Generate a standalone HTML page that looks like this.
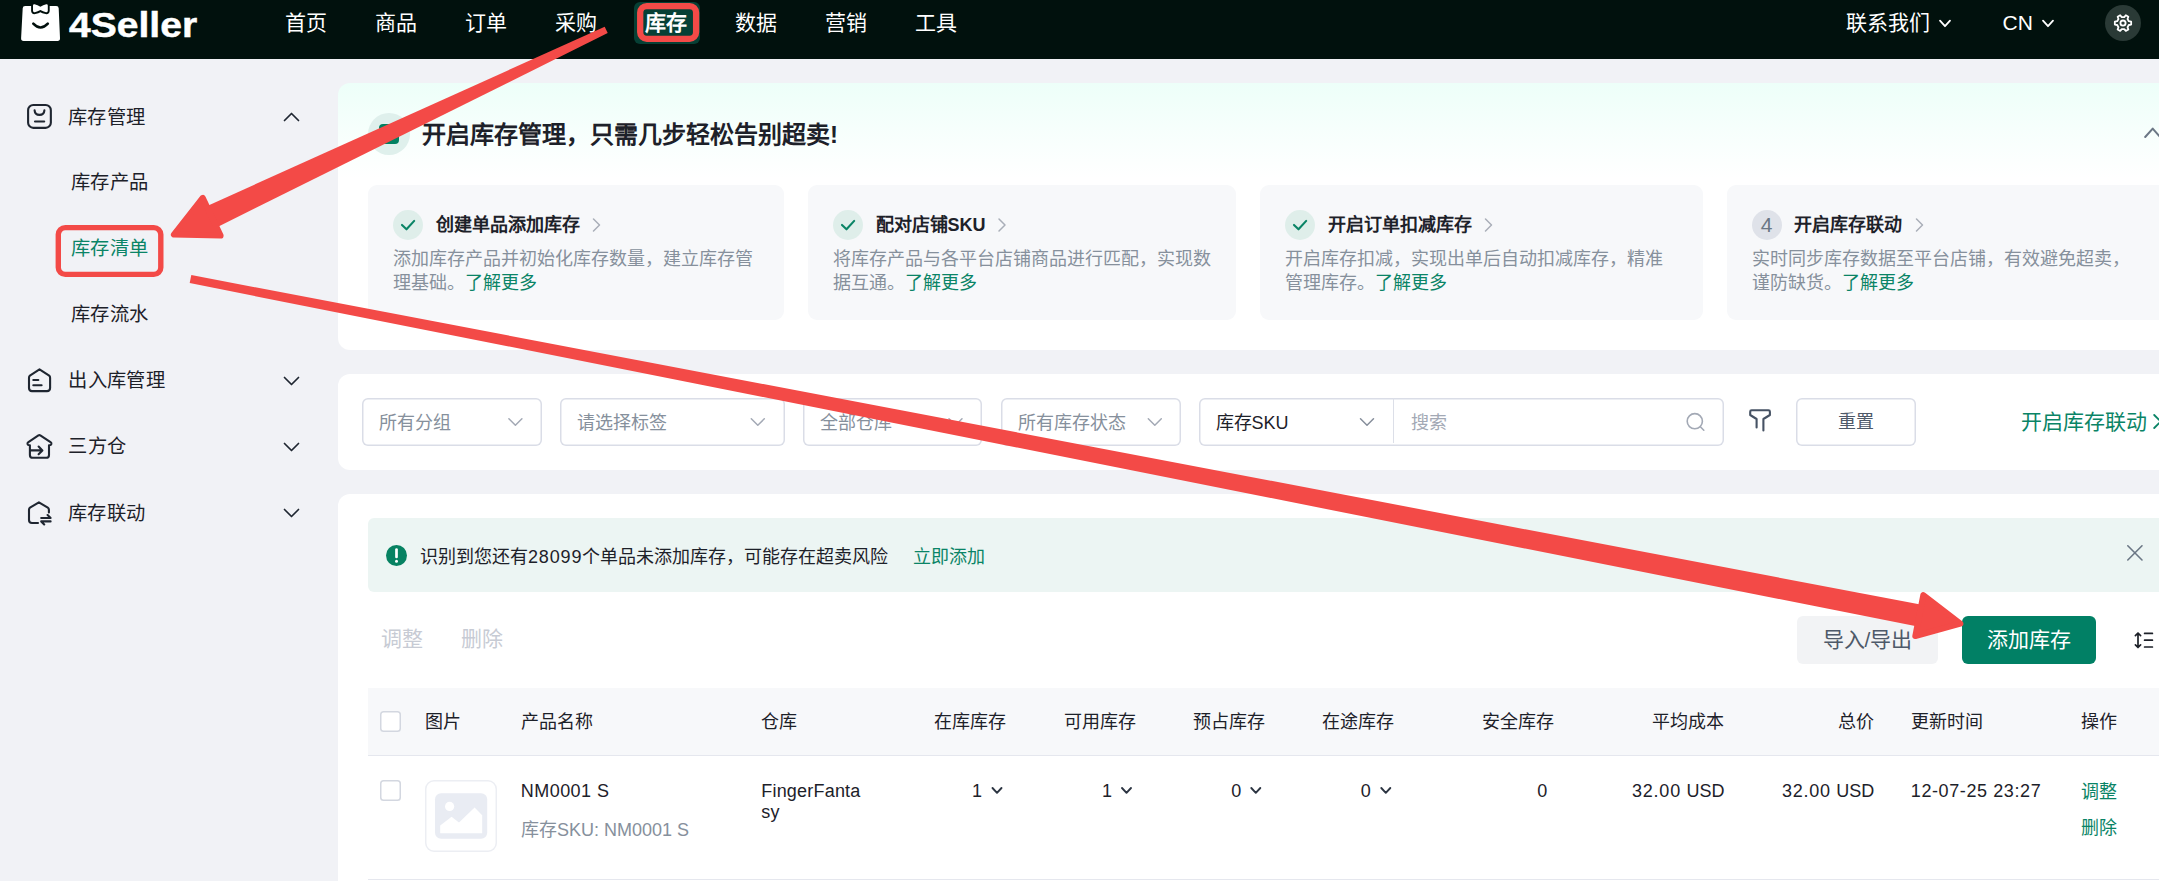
<!DOCTYPE html>
<html lang="zh-CN">
<head>
<meta charset="utf-8">
<title>4Seller - 库存清单</title>
<style>
*{box-sizing:border-box;margin:0;padding:0}
html,body{width:2159px;height:881px;overflow:hidden}
body{position:relative;background:#f1f2f6;font-family:"Liberation Sans",sans-serif;color:#1d2129;font-size:18px}
.t{position:absolute;white-space:nowrap;display:block}
.j{display:inline-block;white-space:nowrap;text-align-last:justify}
.abs{position:absolute}
header{position:absolute;left:0;top:0;width:2159px;height:59px;background:#01110d}
.card{position:absolute;left:338px;width:1840px;background:#fff;border-radius:12px}
.step{position:absolute;top:102px;height:134.5px;background:#f7f8fa;border-radius:9px}
.sel{position:absolute;top:24px;height:48px;box-shadow:inset 0 0 0 1.5px #dadde7;border-radius:6px;background:#fff}
.cb{position:absolute;width:21px;height:21px;box-shadow:inset 0 0 0 1.5px #d3d7e0;border-radius:3.5px;background:#fff}
svg{position:absolute;left:0;top:0;overflow:visible}
a{color:#0a8466;text-decoration:none}
</style>
</head>
<body>

<header>
<svg width="70" height="59" viewBox="0 0 70 59">
<path d="M25.2 5.9 H56.2 Q58.6 5.9 58.7 8.3 L60 38.3 Q60.1 40.9 57.5 40.9 H23.6 Q21 40.9 21.1 38.3 L22.7 8.3 Q22.8 5.9 25.2 5.9Z" fill="#fff"/>
<path d="M33 5.6 Q33 4 34.6 4.3 Q37.6 5 40.4 6.7 Q43.2 5 46.2 4.3 Q47.8 4 47.8 5.6 V10.8 Q47.8 12.6 46 12.2 Q43 11.6 40.4 10.1 Q37.8 11.6 34.8 12.2 Q33 12.6 33 10.8Z" fill="#fff" stroke="#010f0c" stroke-width="3.8" stroke-linejoin="round" style="paint-order:stroke"/>
<path d="M33.3 23.7 Q40.5 31.4 47.8 23.7" fill="none" stroke="#010f0c" stroke-width="2.6" stroke-linecap="round"/>
</svg>
<span class="t" style="left:69px;top:2.6px;font-size:35.5px;line-height:44px;font-weight:700;color:#fff;-webkit-text-stroke:0.5px #fff;transform-origin:0 50%;transform:scaleX(1.1)">4Seller</span>
<div class="abs" style="left:634px;top:2px;width:66px;height:42px;border-radius:6px;background:#064035"></div>
<nav>
<span class="t" style="left:285px;top:6.50px;font-size:21px;line-height:32px;color:#fff;"><span class="j" style="width:2em">首页</span></span>
<span class="t" style="left:375px;top:6.50px;font-size:21px;line-height:32px;color:#fff;"><span class="j" style="width:2em">商品</span></span>
<span class="t" style="left:465px;top:6.50px;font-size:21px;line-height:32px;color:#fff;"><span class="j" style="width:2em">订单</span></span>
<span class="t" style="left:555px;top:6.50px;font-size:21px;line-height:32px;color:#fff;"><span class="j" style="width:2em">采购</span></span>
<span class="t" style="left:645px;top:6.50px;font-size:21px;line-height:32px;color:#fff;font-weight:700;"><span class="j" style="width:2em">库存</span></span>
<span class="t" style="left:735px;top:6.50px;font-size:21px;line-height:32px;color:#fff;"><span class="j" style="width:2em">数据</span></span>
<span class="t" style="left:825px;top:6.50px;font-size:21px;line-height:32px;color:#fff;"><span class="j" style="width:2em">营销</span></span>
<span class="t" style="left:915px;top:6.50px;font-size:21px;line-height:32px;color:#fff;"><span class="j" style="width:2em">工具</span></span>
</nav>
<span class="t" style="left:1846px;top:6.50px;font-size:21px;line-height:32px;color:#fff;"><span class="j" style="width:4em">联系我们</span></span>
<span class="t" style="left:2002.5px;top:6.50px;font-size:21px;line-height:32px;color:#fff;">CN</span>
<div class="abs" style="left:2105px;top:5px;width:36px;height:36px;border-radius:50%;background:#2a3a36"></div>
<svg width="2159" height="59" viewBox="0 0 2159 59">
<polyline points="1940.0,20.6 1945.0,26.2 1950.0,20.6" fill="none" stroke="#fff" stroke-width="1.8" stroke-linecap="round" stroke-linejoin="round"/>
<polyline points="2043.0,20.6 2048.0,26.2 2053.0,20.6" fill="none" stroke="#fff" stroke-width="1.8" stroke-linecap="round" stroke-linejoin="round"/>
<g transform="translate(2113.5 13.6)" fill="none" stroke="#fff" stroke-width="1.8" stroke-linejoin="round"><path d="M15.30 7.61 L17.67 8.03 L17.67 10.97 L15.30 11.39 L14.03 13.58 L14.86 15.84 L12.31 17.31 L10.77 15.47 L8.23 15.47 L6.69 17.31 L4.14 15.84 L4.97 13.58 L3.70 11.39 L1.33 10.97 L1.33 8.03 L3.70 7.61 L4.97 5.42 L4.14 3.16 L6.69 1.69 L8.23 3.53 L10.77 3.53 L12.31 1.69 L14.86 3.16 L14.03 5.42Z"/><circle cx="9.5" cy="9.5" r="2.6"/></g>
</svg>
</header>
<aside>
<span class="t" style="left:68px;top:102.70px;font-size:19.3px;line-height:29px;color:#1d2129;"><span class="j" style="width:4em">库存管理</span></span>
<span class="t" style="left:71px;top:168.20px;font-size:19.3px;line-height:29px;color:#1d2129;"><span class="j" style="width:4em">库存产品</span></span>
<span class="t" style="left:71px;top:234.20px;font-size:19.3px;line-height:29px;color:#0a8466;"><span class="j" style="width:4em">库存清单</span></span>
<span class="t" style="left:71px;top:300.20px;font-size:19.3px;line-height:29px;color:#1d2129;"><span class="j" style="width:4em">库存流水</span></span>
<span class="t" style="left:68.2px;top:366.20px;font-size:19.3px;line-height:29px;color:#1d2129;"><span class="j" style="width:5em">出入库管理</span></span>
<span class="t" style="left:68.2px;top:432.40px;font-size:19.3px;line-height:29px;color:#1d2129;"><span class="j" style="width:3em">三方仓</span></span>
<span class="t" style="left:68px;top:498.70px;font-size:19.3px;line-height:29px;color:#1d2129;"><span class="j" style="width:4em">库存联动</span></span>
<svg width="338" height="881" viewBox="0 0 338 881" fill="none" stroke="#1f2631" stroke-width="2.1" stroke-linecap="round" stroke-linejoin="round">
<rect x="28.1" y="105" width="22.75" height="22.85" rx="5.2"/>
<path d="M34.6 110.4 Q34.9 114.9 39.5 114.9 Q44.1 114.9 44.4 110.4 M35 121.5 H44.2"/>
<path d="M39.5 369.4 L49.2 375.6 Q50.1 376.3 50.1 377.8 V388 Q50.1 391.1 47 391.1 H32 Q29 391.1 29 388 V377.8 Q29 376.3 29.9 375.6Z M33.3 380 H38.3 M33.3 385.2 H41.6"/>
<path d="M29.9 445.2 V454.9 Q29.9 457.8 32.8 457.8 H46.1 Q49 457.8 49 454.9 V445.2 M29.9 445.2 Q27.9 445.4 27.5 443.9 Q27.3 442.9 28.4 442.1 L38.4 435.4 Q39.4 434.8 40.3 435.4 L50.5 442.1 Q51.6 442.9 51.4 443.9 Q51 445.4 49 445.2 M30.2 450.4 H42 M38.6 446.6 L42.4 450.4 L38.6 454.2"/>
<path d="M38 523 H32 Q29 523 29 520 V510 Q29 508.4 30 507.7 L38.9 502.3 L47.8 507.7 Q48.9 508.4 48.9 510 V512.4 M41.2 518 H50.6 L47.6 515 M50.6 521.4 H41.2 L44.2 524.4"/>
</svg>
<svg width="338" height="881" viewBox="0 0 338 881">
<polyline points="284.5,120.5 291.5,113.5 298.5,120.5" fill="none" stroke="#1f2631" stroke-width="1.7" stroke-linecap="round" stroke-linejoin="round"/>
<polyline points="284.5,377.5 291.5,384.5 298.5,377.5" fill="none" stroke="#1f2631" stroke-width="1.7" stroke-linecap="round" stroke-linejoin="round"/>
<polyline points="284.5,443.5 291.5,450.5 298.5,443.5" fill="none" stroke="#1f2631" stroke-width="1.7" stroke-linecap="round" stroke-linejoin="round"/>
<polyline points="284.5,509.5 291.5,516.5 298.5,509.5" fill="none" stroke="#1f2631" stroke-width="1.7" stroke-linecap="round" stroke-linejoin="round"/>
</svg>
</aside>
<main>
<section class="card" style="top:83px;height:267px;background:linear-gradient(180deg,#edfff9 0,#f6fffc 45px,#ffffff 95px)">
<div class="abs" style="left:30px;top:30px;width:42px;height:42px;border-radius:50%;background:#dff0ec"></div>
<div class="abs" style="left:41px;top:41px;width:20px;height:20px;border-radius:4px;background:#008060"></div>
<span class="t" style="left:84px;top:33.90px;font-size:24px;line-height:36px;color:#1d2129;font-weight:700;"><span class="j" style="width:17em">开启库存管理，只需几步轻松告别超卖</span>!</span>
<div class="step" style="left:30px;width:415.75px">
<div class="abs" style="left:25px;top:25px;width:30px;height:30px;border-radius:50%;background:#dfeeea"></div>
<svg width="60" height="60" viewBox="0 0 60 60"><polyline points="34,39.9 38.5,44.3 46.2,35.9" fill="none" stroke="#0a8466" stroke-width="2.1" stroke-linecap="round" stroke-linejoin="round"/></svg>
<span class="t" style="left:67.5px;top:27.4px;font-size:18px;line-height:27px;font-weight:700;color:#1d2129"><span class="j" style="width:8em">创建单品添加库存</span></span>
<svg width="460" height="60" viewBox="0 0 460 60"><polyline points="222.5,37.0 228.5,43.0 234.5,37.0" fill="none" stroke="#a9aeb8" stroke-width="1.5" stroke-linecap="round" stroke-linejoin="round" transform="rotate(-90 228.5 40)"/></svg>
<p class="t" style="left:25.4px;top:61.7px;font-size:18px;line-height:24px;color:#86909c"><span class="j" style="width:20em">添加库存产品并初始化库存数量，建立库存管</span><br><span class="j" style="width:4em">理基础。</span><a><span class="j" style="width:4em">了解更多</span></a></p>
</div>
<div class="step" style="left:470px;width:428px">
<div class="abs" style="left:25px;top:25px;width:30px;height:30px;border-radius:50%;background:#dfeeea"></div>
<svg width="60" height="60" viewBox="0 0 60 60"><polyline points="34,39.9 38.5,44.3 46.2,35.9" fill="none" stroke="#0a8466" stroke-width="2.1" stroke-linecap="round" stroke-linejoin="round"/></svg>
<span class="t" style="left:67.5px;top:27.4px;font-size:18px;line-height:27px;font-weight:700;color:#1d2129"><span class="j" style="width:4em">配对店铺</span>SKU</span>
<svg width="460" height="60" viewBox="0 0 460 60"><polyline points="188.0,37.0 194.0,43.0 200.0,37.0" fill="none" stroke="#a9aeb8" stroke-width="1.5" stroke-linecap="round" stroke-linejoin="round" transform="rotate(-90 194.0 40)"/></svg>
<p class="t" style="left:25.4px;top:61.7px;font-size:18px;line-height:24px;color:#86909c"><span class="j" style="width:21em">将库存产品与各平台店铺商品进行匹配，实现数</span><br><span class="j" style="width:4em">据互通。</span><a><span class="j" style="width:4em">了解更多</span></a></p>
</div>
<div class="step" style="left:922px;width:442.5px">
<div class="abs" style="left:25px;top:25px;width:30px;height:30px;border-radius:50%;background:#dfeeea"></div>
<svg width="60" height="60" viewBox="0 0 60 60"><polyline points="34,39.9 38.5,44.3 46.2,35.9" fill="none" stroke="#0a8466" stroke-width="2.1" stroke-linecap="round" stroke-linejoin="round"/></svg>
<span class="t" style="left:67.5px;top:27.4px;font-size:18px;line-height:27px;font-weight:700;color:#1d2129"><span class="j" style="width:8em">开启订单扣减库存</span></span>
<svg width="460" height="60" viewBox="0 0 460 60"><polyline points="222.5,37.0 228.5,43.0 234.5,37.0" fill="none" stroke="#a9aeb8" stroke-width="1.5" stroke-linecap="round" stroke-linejoin="round" transform="rotate(-90 228.5 40)"/></svg>
<p class="t" style="left:25.4px;top:61.7px;font-size:18px;line-height:24px;color:#86909c"><span class="j" style="width:21em">开启库存扣减，实现出单后自动扣减库存，精准</span><br><span class="j" style="width:5em">管理库存。</span><a><span class="j" style="width:4em">了解更多</span></a></p>
</div>
<div class="step" style="left:1388.5px;width:460px">
<div class="abs" style="left:25px;top:25px;width:30px;height:30px;border-radius:50%;background:#dfe2e9"></div>
<span class="t" style="left:25px;top:25px;width:30px;text-align:center;font-size:21px;line-height:30px;color:#6b7785">4</span>
<span class="t" style="left:67.5px;top:27.4px;font-size:18px;line-height:27px;font-weight:700;color:#1d2129"><span class="j" style="width:6em">开启库存联动</span></span>
<svg width="460" height="60" viewBox="0 0 460 60"><polyline points="186.5,37.0 192.5,43.0 198.5,37.0" fill="none" stroke="#a9aeb8" stroke-width="1.5" stroke-linecap="round" stroke-linejoin="round" transform="rotate(-90 192.5 40)"/></svg>
<p class="t" style="left:25.4px;top:61.7px;font-size:18px;line-height:24px;color:#86909c"><span class="j" style="width:21em">实时同步库存数据至平台店铺，有效避免超卖，</span><br><span class="j" style="width:5em">谨防缺货。</span><a><span class="j" style="width:4em">了解更多</span></a></p>
</div>
<svg width="1840" height="267" viewBox="0 0 1840 267"><polyline points="1807.2,54.0 1814.7,45.6 1822.2,54.0" fill="none" stroke="#6b7785" stroke-width="2" stroke-linecap="round" stroke-linejoin="round"/></svg>
</section>
<section class="card" style="top:374px;height:96px">
<div class="sel" style="left:24px;width:180px"><span class="t" style="left:16.5px;top:11.7px;font-size:18px;line-height:27px;color:#86909c"><span class="j" style="width:4em">所有分组</span></span></div>
<div class="sel" style="left:222px;width:224.6px"><span class="t" style="left:16.5px;top:11.7px;font-size:18px;line-height:27px;color:#86909c"><span class="j" style="width:5em">请选择标签</span></span></div>
<div class="sel" style="left:465px;width:179.4px"><span class="t" style="left:16.5px;top:11.7px;font-size:18px;line-height:27px;color:#86909c"><span class="j" style="width:4em">全部仓库</span></span></div>
<div class="sel" style="left:663.3px;width:179.7px"><span class="t" style="left:16.5px;top:11.7px;font-size:18px;line-height:27px;color:#86909c"><span class="j" style="width:6em">所有库存状态</span></span></div>
<div class="sel" style="left:861px;width:524.5px"><span class="t" style="left:16.5px;top:11.7px;font-size:18px;line-height:27px;color:#1d2129"><span class="j" style="width:2em">库存</span>SKU</span><div class="abs" style="left:193.5px;top:0;width:1.5px;height:45px;background:#dcdfe8"></div><span class="t" style="left:212px;top:11.7px;font-size:18px;line-height:27px;color:#a3a9b5"><span class="j" style="width:2em">搜索</span></span></div>
<div class="sel" style="left:1458px;width:119.7px;height:47.5px"><span class="t" style="left:0;width:100%;text-align:center;top:11.2px;font-size:18px;line-height:27px;color:#4e5969"><span class="j" style="width:2em">重置</span></span></div>
<span class="t" style="left:1683px;top:31.50px;font-size:21px;line-height:32px;color:#0a8466;"><span class="j" style="width:6em">开启库存联动</span></span>
<svg width="1840" height="96" viewBox="338 374 1840 96">
<polyline points="508.9,418.8 515.4,425.2 521.9,418.8" fill="none" stroke="#a3a9b5" stroke-width="1.5" stroke-linecap="round" stroke-linejoin="round"/>
<polyline points="751.3,418.8 757.8,425.2 764.3,418.8" fill="none" stroke="#a3a9b5" stroke-width="1.5" stroke-linecap="round" stroke-linejoin="round"/>
<polyline points="949.0,418.8 955.5,425.2 962.0,418.8" fill="none" stroke="#a3a9b5" stroke-width="1.5" stroke-linecap="round" stroke-linejoin="round"/>
<polyline points="1148.3,418.8 1154.8,425.2 1161.3,418.8" fill="none" stroke="#a3a9b5" stroke-width="1.5" stroke-linecap="round" stroke-linejoin="round"/>
<polyline points="1360.5,418.8 1367.0,425.2 1373.5,418.8" fill="none" stroke="#868e9b" stroke-width="1.5" stroke-linecap="round" stroke-linejoin="round"/>
<circle cx="1694.8" cy="421.2" r="7.6" fill="none" stroke="#a3a9b5" stroke-width="1.6"/><path d="M1700.6 427 L1703.8 430.2" stroke="#a3a9b5" stroke-width="1.6" stroke-linecap="round"/>
<path d="M1756.6 427.5 V419 L1750.2 415 V411.7 Q1750.2 410.3 1751.6 410.3 H1768.5 Q1769.9 410.3 1769.9 411.7 V415 L1763.4 419 V430.5" fill="none" stroke="#465264" stroke-width="2.1" stroke-linecap="round" stroke-linejoin="round"/>
<polyline points="2151.0,418.2 2157.5,424.8 2164.0,418.2" fill="none" stroke="#0a8466" stroke-width="1.8" stroke-linecap="round" stroke-linejoin="round" transform="rotate(-90 2157.5 421.5)"/>
</svg>
</section>
<section class="card" style="top:494px;height:420px">
<div class="abs" style="left:30px;top:24px;width:1830px;height:74px;border-radius:6px;background:#ecf5f3"></div>
<div class="abs" style="left:48px;top:51px;width:21px;height:21px;border-radius:50%;background:#078262"></div>
<svg width="1840" height="120" viewBox="338 494 1840 120"><path d="M396.5 549.6 V557" stroke="#fff" stroke-width="2.7" stroke-linecap="round"/><circle cx="396.5" cy="561.2" r="1.5" fill="#fff"/><path d="M2127.8 545.8 L2142 560 M2142 545.8 L2127.8 560" stroke="#6b7785" stroke-width="1.6" stroke-linecap="round"/></svg>
<span class="t" style="left:82px;top:49.50px;font-size:18px;line-height:27px;color:#1d2129;"><span class="j" style="width:6em">识别到您还有</span><span style="letter-spacing:0.85px">28099</span><span class="j" style="width:17em">个单品未添加库存，可能存在超卖风险</span></span>
<span class="t" style="left:574.5px;top:49.50px;font-size:18px;line-height:27px;color:#0a8466;"><span class="j" style="width:4em">立即添加</span></span>
<span class="t" style="left:43px;top:129.00px;font-size:21px;line-height:32px;color:#c7cbd4;"><span class="j" style="width:2em">调整</span></span>
<span class="t" style="left:122.5px;top:129.00px;font-size:21px;line-height:32px;color:#c7cbd4;"><span class="j" style="width:2em">删除</span></span>
<div class="abs" style="left:1459px;top:122px;width:141px;height:48px;border-radius:6px;background:#f2f3f5"><span class="t" style="left:0;width:100%;text-align:center;top:8px;font-size:21px;line-height:32px;color:#4e5969"><span class="j" style="width:2em">导入</span>/<span class="j" style="width:2em">导出</span></span></div>
<div class="abs" style="left:1624px;top:122px;width:134px;height:48px;border-radius:6px;background:#018065"><span class="t" style="left:0;width:100%;text-align:center;top:8px;font-size:21px;line-height:32px;color:#fff"><span class="j" style="width:4em">添加库存</span></span></div>
<svg width="1840" height="200" viewBox="338 494 1840 200"><g fill="none" stroke="#1d2129" stroke-width="1.7" stroke-linecap="round" stroke-linejoin="round"><path d="M2138 633 V647.4 M2135.4 635.6 L2138 633 L2140.6 635.6 M2135.4 644.8 L2138 647.4 L2140.6 644.8 M2144.6 633.4 H2152.4 M2144.6 640.2 H2152.4 M2144.6 647 H2152.4"/></g></svg>
<div class="abs" style="left:30px;top:194px;width:1830px;height:67.5px;background:#f7f8fa;border-bottom:1.5px solid #e5e7ee"></div>
<div class="abs" style="left:30px;top:384.5px;width:1830px;height:1.5px;background:#e5e7ee"></div>
<div class="cb" style="left:42px;top:217px"></div>
<div class="cb" style="left:42px;top:286px"></div>
<span class="t" style="left:86.5px;top:214.60px;font-size:18px;line-height:27px;color:#1d2129;"><span class="j" style="width:2em">图片</span></span>
<span class="t" style="left:182.75px;top:214.60px;font-size:18px;line-height:27px;color:#1d2129;"><span class="j" style="width:4em">产品名称</span></span>
<span class="t" style="left:422.5px;top:214.60px;font-size:18px;line-height:27px;color:#1d2129;"><span class="j" style="width:2em">仓库</span></span>
<span class="t" style="right:1172px;top:214.60px;font-size:18px;line-height:27px;color:#1d2129;"><span class="j" style="width:4em">在库库存</span></span>
<span class="t" style="right:1042.5px;top:214.60px;font-size:18px;line-height:27px;color:#1d2129;"><span class="j" style="width:4em">可用库存</span></span>
<span class="t" style="right:913px;top:214.60px;font-size:18px;line-height:27px;color:#1d2129;"><span class="j" style="width:4em">预占库存</span></span>
<span class="t" style="right:784px;top:214.60px;font-size:18px;line-height:27px;color:#1d2129;"><span class="j" style="width:4em">在途库存</span></span>
<span class="t" style="right:624px;top:214.60px;font-size:18px;line-height:27px;color:#1d2129;"><span class="j" style="width:4em">安全库存</span></span>
<span class="t" style="right:454px;top:214.60px;font-size:18px;line-height:27px;color:#1d2129;"><span class="j" style="width:4em">平均成本</span></span>
<span class="t" style="right:304px;top:214.60px;font-size:18px;line-height:27px;color:#1d2129;"><span class="j" style="width:2em">总价</span></span>
<span class="t" style="left:1572.8px;top:214.60px;font-size:18px;line-height:27px;color:#1d2129;"><span class="j" style="width:4em">更新时间</span></span>
<span class="t" style="left:1743.3000000000002px;top:214.60px;font-size:18px;line-height:27px;color:#1d2129;"><span class="j" style="width:2em">操作</span></span>
<div class="abs" style="left:87px;top:286px;width:72px;height:72px;box-shadow:inset 0 0 0 1.5px #eceef3;border-radius:9px;background:#fff"></div>
<svg width="1840" height="420" viewBox="338 494 1840 420"><rect x="435" y="793.2" width="52.2" height="45.6" rx="6" fill="#e9ecf3"/><circle cx="449.6" cy="806.4" r="4.6" fill="#fff"/><path d="M440.2 833.2 V825.6 L451.6 816.8 L459 822.6 L474.6 807.4 L482.2 815.2 V833.2Z" fill="#fff"/>
<polyline points="992.5,788.0 997.0,792.8 1001.5,788.0" fill="none" stroke="#2c3542" stroke-width="1.9" stroke-linecap="round" stroke-linejoin="round"/>
<polyline points="1122.0,788.0 1126.5,792.8 1131.0,788.0" fill="none" stroke="#2c3542" stroke-width="1.9" stroke-linecap="round" stroke-linejoin="round"/>
<polyline points="1251.3,788.0 1255.8,792.8 1260.3,788.0" fill="none" stroke="#2c3542" stroke-width="1.9" stroke-linecap="round" stroke-linejoin="round"/>
<polyline points="1381.3,788.0 1385.8,792.8 1390.3,788.0" fill="none" stroke="#2c3542" stroke-width="1.9" stroke-linecap="round" stroke-linejoin="round"/>
</svg>
<span class="t" style="left:182.79999999999995px;top:283.90px;font-size:18px;line-height:27px;color:#1d2129;letter-spacing:0.45px;">NM0001 S</span>
<span class="t" style="left:183px;top:322.80px;font-size:18px;line-height:27px;color:#86909c;"><span class="j" style="width:2em">库存</span>SKU: NM0001 S</span>
<p class="t" style="left:423.25px;top:286.9px;font-size:18px;line-height:21px;letter-spacing:0.2px;color:#1d2129">FingerFanta<br>sy</p>
<span class="t" style="right:1196px;top:283.90px;font-size:18px;line-height:27px;color:#1d2129;">1</span>
<span class="t" style="right:1066px;top:283.90px;font-size:18px;line-height:27px;color:#1d2129;">1</span>
<span class="t" style="right:936.7px;top:283.90px;font-size:18px;line-height:27px;color:#1d2129;">0</span>
<span class="t" style="right:807.2px;top:283.90px;font-size:18px;line-height:27px;color:#1d2129;">0</span>
<span class="t" style="right:630.7px;top:283.90px;font-size:18px;line-height:27px;color:#1d2129;">0</span>
<span class="t" style="right:453.5px;top:283.90px;font-size:18px;line-height:27px;color:#1d2129;"><span style="letter-spacing:.75px">32.00</span><span style="margin-left:5.6px">USD</span></span>
<span class="t" style="right:303.70000000000005px;top:283.90px;font-size:18px;line-height:27px;color:#1d2129;"><span style="letter-spacing:.75px">32.00</span><span style="margin-left:5.6px">USD</span></span>
<span class="t" style="left:1572.8px;top:283.90px;font-size:18px;line-height:27px;color:#1d2129;letter-spacing:0.6px;">12-07-25 23:27</span>
<span class="t" style="left:1743px;top:284.50px;font-size:18px;line-height:27px;color:#0a8466;"><span class="j" style="width:2em">调整</span></span>
<span class="t" style="left:1743px;top:320.50px;font-size:18px;line-height:27px;color:#0a8466;"><span class="j" style="width:2em">删除</span></span>
</section>
</main>
<svg width="2159" height="881" viewBox="0 0 2159 881" style="z-index:10">
<rect x="640.2" y="6.1" width="55.9" height="32.7" rx="6.5" fill="none" stroke="#f34a47" stroke-width="6.3"/>
<rect x="58.3" y="227.6" width="102.5" height="46.8" rx="7" fill="none" stroke="#f34a47" stroke-width="5.4"/>
<polygon points="604.7,26.7 203.9,207.4 214.0,228.7 607.7,33.1" fill="#f34a47"/><polygon points="202.7,197.9 173.9,234.6 220.6,235.6" fill="#f34a47" stroke="#f34a47" stroke-width="6" stroke-linejoin="round"/>
<polygon points="189.7,283.1 1920.2,627.1 1924.4,605.3 191.3,275.1" fill="#f34a47"/><polygon points="1915.3,636.1 1960.4,623.6 1923.3,595.1" fill="#f34a47" stroke="#f34a47" stroke-width="6" stroke-linejoin="round"/>
</svg>
</body>
</html>
